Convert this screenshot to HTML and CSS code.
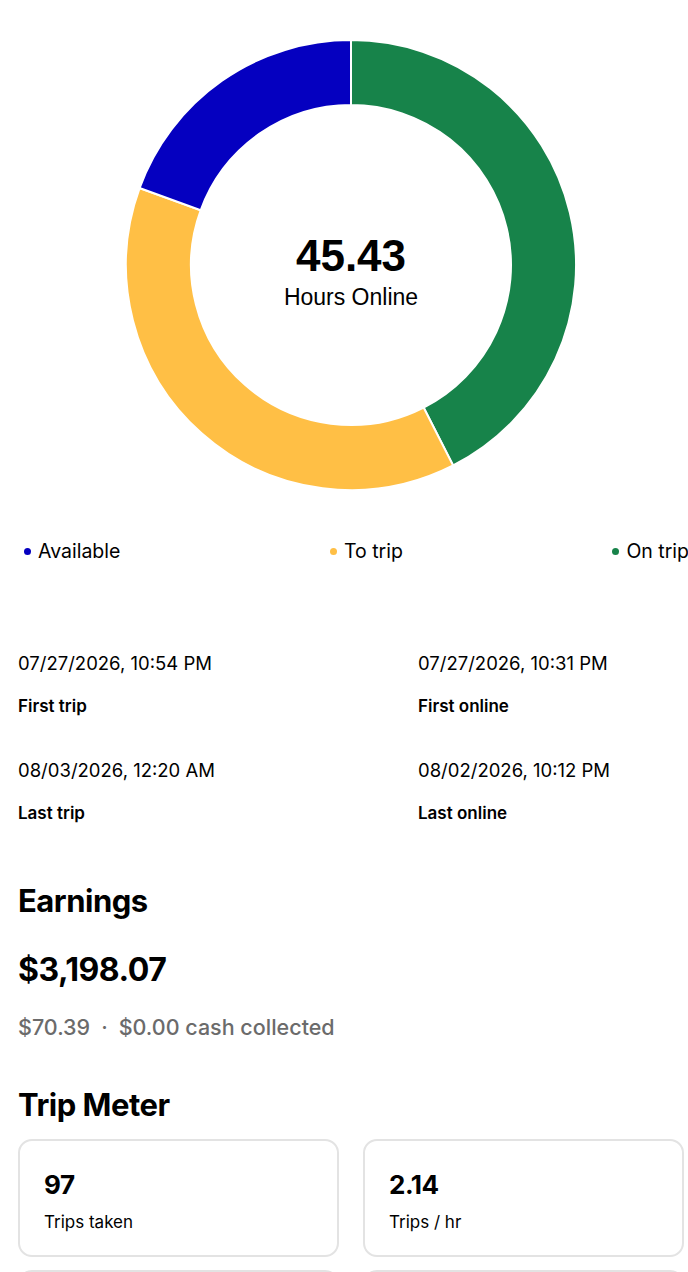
FILE: index.html
```html
<!DOCTYPE html>
<html lang="en">
<head>
    <meta charset="UTF-8">
    <meta name="viewport" content="width=device-width, initial-scale=1.0">
    <title>Weekly Summary</title>
    <link rel="stylesheet" href="styles.css">
</head>
<body>
    <div class="page">
        <!-- Hours online donut -->
        <div class="donut">
            <svg width="450" height="450" viewBox="0 0 450 450">
                <path class="seg" fill="#17834a" d="M225,0 A225,225 0 0 1 327.15,425.5 L297.64,367.56 A160,160 0 0 0 225,65 Z"/>
                <path class="seg" fill="#ffbf45" d="M327.15,425.5 A225,225 0 0 1 13.57,148.05 L74.65,170.28 A160,160 0 0 0 297.64,367.56 Z"/>
                <path class="seg" fill="#0500c0" d="M13.57,148.05 A225,225 0 0 1 225,0 L225,65 A160,160 0 0 0 74.65,170.28 Z"/>
            </svg>
            <div class="donut-center">
                <div class="donut-value">45.43</div>
                <div class="donut-label">Hours Online</div>
            </div>
        </div>

        <ul class="legend">
            <li><span class="dot dot-available"></span>Available</li>
            <li><span class="dot dot-totrip"></span>To trip</li>
            <li><span class="dot dot-ontrip"></span>On trip</li>
        </ul>

        <div class="times">
            <div class="time-item">
                <div class="time-value">07/27/2026, 10:54 PM</div>
                <div class="time-label">First trip</div>
            </div>
            <div class="time-item">
                <div class="time-value">07/27/2026, 10:31 PM</div>
                <div class="time-label">First online</div>
            </div>
            <div class="time-item">
                <div class="time-value">08/03/2026, 12:20 AM</div>
                <div class="time-label">Last trip</div>
            </div>
            <div class="time-item">
                <div class="time-value">08/02/2026, 10:12 PM</div>
                <div class="time-label">Last online</div>
            </div>
        </div>

        <section class="earnings">
            <h2>Earnings</h2>
            <div class="amount">$3,198.07</div>
            <div class="sub">$70.39<span class="sep">&middot;</span>$0.00 cash collected</div>
        </section>

        <section class="meter">
            <h2>Trip Meter</h2>
            <div class="cards">
                <div class="card">
                    <div class="card-value">97</div>
                    <div class="card-label">Trips taken</div>
                </div>
                <div class="card">
                    <div class="card-value">2.14</div>
                    <div class="card-label">Trips / hr</div>
                </div>
                <div class="card"></div>
                <div class="card"></div>
            </div>
        </section>
    </div>
</body>
</html>
```

FILE: styles.css
```css
html, body {
    overflow: hidden;
}

body {
    margin: 0;
    font-family: Inter, "Liberation Sans", sans-serif;
    color: #000;
    background: #fff;
}

.page {
    width: 666px;
    padding: 0 20px 0 18px;
}

/* Donut */
.donut {
    position: relative;
    width: 450px;
    height: 450px;
    margin: 40px auto 0;
}

.donut svg {
    display: block;
}

.seg {
    stroke: #fff;
    stroke-width: 2;
}

.donut-center {
    position: absolute;
    top: 0;
    left: 0;
    right: 0;
    bottom: 0;
    display: flex;
    flex-direction: column;
    justify-content: center;
    align-items: center;
    font-family: "Liberation Sans", Arial, sans-serif;
    padding-top: 12px;
}

.donut-value {
    font-size: 44px;
    font-weight: bold;
    line-height: 50px;
}

.donut-label {
    font-size: 23px;
    line-height: 28px;
    margin-top: 2px;
}

/* Legend */
.legend {
    list-style: none;
    margin: 49px -5px 0 6px;
    padding: 0;
    display: flex;
    justify-content: space-between;
    font-size: 19.5px;
    line-height: 24px;
}

.legend li {
    display: flex;
    align-items: center;
    white-space: nowrap;
}

.dot {
    width: 7px;
    height: 7px;
    border-radius: 50%;
    margin-right: 7px;
}

.dot-available { background: #0500c0; }
.dot-totrip { background: #ffbf45; }
.dot-ontrip { background: #17834a; }

/* First / last times */
.times {
    display: grid;
    grid-template-columns: 400px 1fr;
    row-gap: 42px;
    margin-top: 88px;
}

.time-value {
    font-size: 18.5px;
    line-height: 24px;
}

.time-label {
    font-size: 17px;
    font-weight: 600;
    line-height: 20px;
    margin-top: 21px;
}

/* Earnings */
h2 {
    font-size: 31px;
    font-weight: 700;
    line-height: 38px;
    margin: 0;
    letter-spacing: -0.5px;
}

.earnings {
    margin-top: 59px;
}

.amount {
    font-size: 32px;
    font-weight: 700;
    line-height: 38px;
    margin-top: 31px;
    letter-spacing: -0.5px;
}

.sub {
    color: #6b6b6b;
    font-size: 21.5px;
    font-weight: 500;
    line-height: 26px;
    margin-top: 25px;
}

.sep {
    margin: 0 11px;
}

/* Trip meter */
.meter {
    margin-top: 46px;
}

.cards {
    display: grid;
    grid-template-columns: 1fr 1fr;
    gap: 13px 24px;
    margin-top: 15px;
}

.card {
    border: 2px solid #e3e3e3;
    border-radius: 14px;
    padding: 28px 24px 30px;
    height: 56px;
}

.card-value {
    font-size: 26px;
    font-weight: 700;
    line-height: 32px;
    letter-spacing: -0.5px;
}

.card-label {
    font-size: 17px;
    line-height: 20px;
    margin-top: 11px;
}
```
